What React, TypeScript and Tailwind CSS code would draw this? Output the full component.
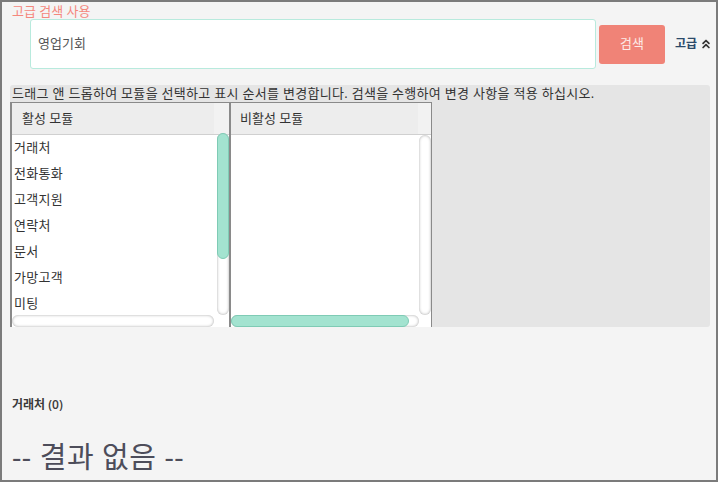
import { ChevronsUp } from "lucide-react";

const activeModules = ["거래처", "전화통화", "고객지원", "연락처", "문서", "가망고객", "미팅"];

const font = "font-['Open_Sans','Noto_Sans_CJK_KR',sans-serif]";

function VTrack({ thumb }: { thumb?: boolean }) {
  return (
    <div className="relative h-full w-[12px] rounded-full bg-white shadow-[inset_0_0_3px_rgba(0,0,0,0.35)]">
      {thumb && (
        <div className="h-[126px] w-[12px] rounded-full border border-[#7fcbb5] bg-[#a3e3d0]" />
      )}
    </div>
  );
}

function HTrack({ thumbWidth }: { thumbWidth?: number }) {
  return (
    <div className="flex h-[12px] w-full rounded-full bg-white shadow-[inset_0_0_3px_rgba(0,0,0,0.35)]">
      {thumbWidth ? (
        <div
          className="h-[12px] rounded-full border border-[#7fcbb5] bg-[#a3e3d0]"
          style={{ width: thumbWidth }}
        />
      ) : null}
    </div>
  );
}

export default function App() {
  return (
    <div className={`h-[482px] w-[718px] overflow-hidden border-2 border-[#7b7b7b] bg-[#f4f4f4] ${font}`}>
      <div className="pl-[10px] pt-[1px] text-[13px] leading-[16px] text-[#f4877d]">고급 검색 사용</div>

      <div className="flex items-center">
        <div className="ml-[28px] flex h-[50px] w-[566px] items-center rounded-[3px] border border-[#b8eadd] bg-white pl-[7px] text-[13px] text-[#555]">
          영업기회
        </div>
        <button className="ml-[3px] h-[39px] w-[66px] rounded-[3px] bg-[#f08377] text-[13px] text-[#fdeae7]">
          검색
        </button>
        <div className="ml-[10px] flex items-center gap-[2px] text-[12px] font-semibold text-[#2c4a6a]">
          고급
          <ChevronsUp size={14} strokeWidth={3} className="text-[#333]" />
        </div>
      </div>

      <div className="ml-[8px] mt-[16px] h-[242px] w-[700px] rounded-[3px] bg-[#e5e5e5]">
        <div className="pl-[2px] text-[13px] leading-[17px] tracking-[0.3px] text-[#333]">
          드래그 앤 드롭하여 모듈을 선택하고 표시 순서를 변경합니다. 검색을 수행하여 변경 사항을 적용 하십시오.
        </div>

        <div className="flex">
          <div className="flex h-[225px] w-[221px] flex-col border-l-2 border-r-2 border-t border-[#8a8a8a] bg-white">
            <div className="flex h-[32px] shrink-0 border-b border-[#d0d0d0]">
              <div className="flex flex-1 items-center bg-[#ededed] pl-[10px] text-[13px] text-[#333]">활성 모듈</div>
              <div className="w-[15px] bg-[#f2f2f2]" />
            </div>
            <div className="flex min-h-0 flex-1">
              <div className="flex-1 overflow-hidden pl-[2px]">
                {activeModules.map((m) => (
                  <div key={m} className="flex h-[26px] items-center text-[13px] tracking-[0.3px] text-[#333]">
                    {m}
                  </div>
                ))}
              </div>
              <div className="-mt-[2px] w-[12px]">
                <VTrack thumb />
              </div>
            </div>
            <div className="flex h-[12px] shrink-0">
              <div className="flex-1 pr-[3px]">
                <HTrack />
              </div>
              <div className="w-[12px]" />
            </div>
          </div>

          <div className="flex h-[225px] w-[201px] flex-col border-r border-t border-[#8a8a8a] bg-white">
            <div className="flex h-[32px] shrink-0 border-b border-[#d0d0d0]">
              <div className="flex flex-1 items-center bg-[#ededed] pl-[9px] text-[13px] text-[#333]">비활성 모듈</div>
              <div className="w-[13px] bg-[#f2f2f2]" />
            </div>
            <div className="flex min-h-0 flex-1 justify-end pr-[1px]">
              <div className="w-[11px]">
                <VTrack />
              </div>
            </div>
            <div className="flex h-[12px] shrink-0">
              <div className="flex-1">
                <HTrack thumbWidth={178} />
              </div>
              <div className="w-[12px]" />
            </div>
          </div>
        </div>
      </div>

      <div className="mt-[70px] pl-[10px] text-[12px] font-semibold leading-[16px] text-[#3a3a3a]">거래처 (0)</div>
      <div className="mt-[24px] pl-[10px] text-[29px] leading-[40px] tracking-[0.5px] text-[#4d4d5a]">-- 결과 없음 --</div>
    </div>
  );
}
